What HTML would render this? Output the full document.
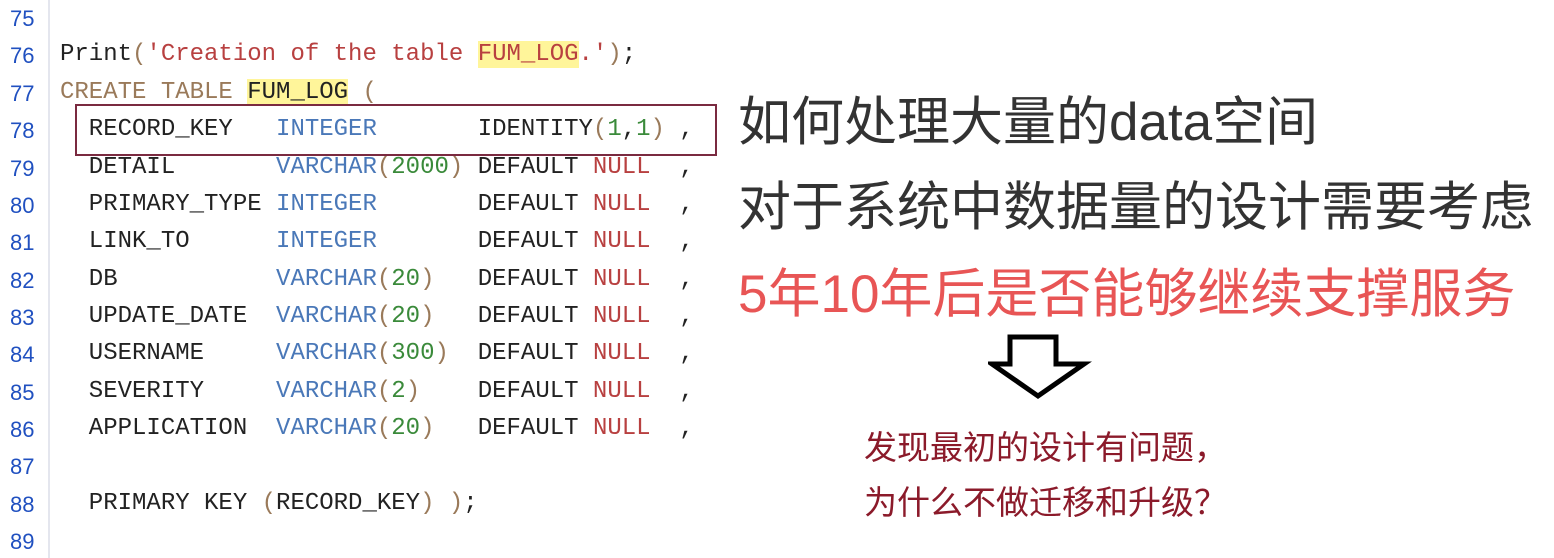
<!DOCTYPE html>
<html><head><meta charset="utf-8"><style>
body{margin:0;width:1554px;height:558px;background:#fff;position:relative;overflow:hidden}
.g{position:absolute;left:48px;top:0;width:2px;height:558px;background:#e4e6ee}
.ln{position:absolute;left:10px;font:22px "Liberation Sans","DejaVu Sans",sans-serif;color:#2050c0}
.c{position:absolute;left:60px;font:24px "Liberation Mono",monospace;color:#222;white-space:pre;letter-spacing:0}
.b{color:#4a78b8}.r{color:#b84040}.gr{color:#3a8a3a}.p{color:#9a7a5a}.hl{background:#fff59a}
.t{position:absolute;font-family:"Liberation Sans","Noto Sans CJK SC",sans-serif;white-space:nowrap;line-height:1}
</style></head><body>
<div class="g"></div>
<div class="ln" style="top:6px">75</div>
<div class="ln" style="top:43px">76</div>
<div class="ln" style="top:81px">77</div>
<div class="ln" style="top:118px">78</div>
<div class="ln" style="top:156px">79</div>
<div class="ln" style="top:193px">80</div>
<div class="ln" style="top:230px">81</div>
<div class="ln" style="top:268px">82</div>
<div class="ln" style="top:305px">83</div>
<div class="ln" style="top:342px">84</div>
<div class="ln" style="top:380px">85</div>
<div class="ln" style="top:417px">86</div>
<div class="ln" style="top:454px">87</div>
<div class="ln" style="top:492px">88</div>
<div class="ln" style="top:529px">89</div>

<div class="c" style="top:41px">Print<span class="p">(</span><span class="r">'Creation of the table <span class="hl">FUM_LOG</span>.'</span><span class="p">)</span>;</div>
<div class="c" style="top:79px"><span class="p">CREATE TABLE </span><span class="hl">FUM_LOG</span><span class="p"> (</span></div>
<div class="c" style="top:116px">  RECORD_KEY   <span class="b">INTEGER</span>       IDENTITY<span class="p">(</span><span class="gr">1</span>,<span class="gr">1</span><span class="p">)</span> ,</div>
<div class="c" style="top:154px">  DETAIL       <span class="b">VARCHAR</span><span class="p">(</span><span class="gr">2000</span><span class="p">)</span> DEFAULT <span class="r">NULL</span>  ,</div>
<div class="c" style="top:191px">  PRIMARY_TYPE <span class="b">INTEGER</span>       DEFAULT <span class="r">NULL</span>  ,</div>
<div class="c" style="top:228px">  LINK_TO      <span class="b">INTEGER</span>       DEFAULT <span class="r">NULL</span>  ,</div>
<div class="c" style="top:266px">  DB           <span class="b">VARCHAR</span><span class="p">(</span><span class="gr">20</span><span class="p">)</span>   DEFAULT <span class="r">NULL</span>  ,</div>
<div class="c" style="top:303px">  UPDATE_DATE  <span class="b">VARCHAR</span><span class="p">(</span><span class="gr">20</span><span class="p">)</span>   DEFAULT <span class="r">NULL</span>  ,</div>
<div class="c" style="top:340px">  USERNAME     <span class="b">VARCHAR</span><span class="p">(</span><span class="gr">300</span><span class="p">)</span>  DEFAULT <span class="r">NULL</span>  ,</div>
<div class="c" style="top:378px">  SEVERITY     <span class="b">VARCHAR</span><span class="p">(</span><span class="gr">2</span><span class="p">)</span>    DEFAULT <span class="r">NULL</span>  ,</div>
<div class="c" style="top:415px">  APPLICATION  <span class="b">VARCHAR</span><span class="p">(</span><span class="gr">20</span><span class="p">)</span>   DEFAULT <span class="r">NULL</span>  ,</div>
<div class="c" style="top:490px">  PRIMARY KEY <span class="p">(</span>RECORD_KEY<span class="p">)</span> <span class="p">)</span>;</div>

<div style="position:absolute;left:75px;top:104px;width:638px;height:48px;border:2px solid #7a2a40"></div>

<div class="t" style="left:738px;top:96px;font-size:53px;color:#333">如何处理大量的data空间</div>
<div class="t" style="left:738px;top:181px;font-size:53px;color:#333">对于系统中数据量的设计需要考虑</div>
<div class="t" style="left:738px;top:268px;font-size:53px;color:#e85555">5年10年后是否能够继续支撑服务</div>
<svg style="position:absolute;left:988px;top:332px" width="104" height="68"><path d="M22 5H68V32H96L50 64L4 32H22Z" fill="#fff" stroke="#000" stroke-width="5" stroke-linejoin="miter"/></svg>
<div class="t" style="left:864px;top:431px;font-size:33px;color:#8b1a2a">发现最初的设计有问题，</div>
<div class="t" style="left:864px;top:486px;font-size:33px;color:#8b1a2a">为什么不做迁移和升级？</div>
</body></html>
